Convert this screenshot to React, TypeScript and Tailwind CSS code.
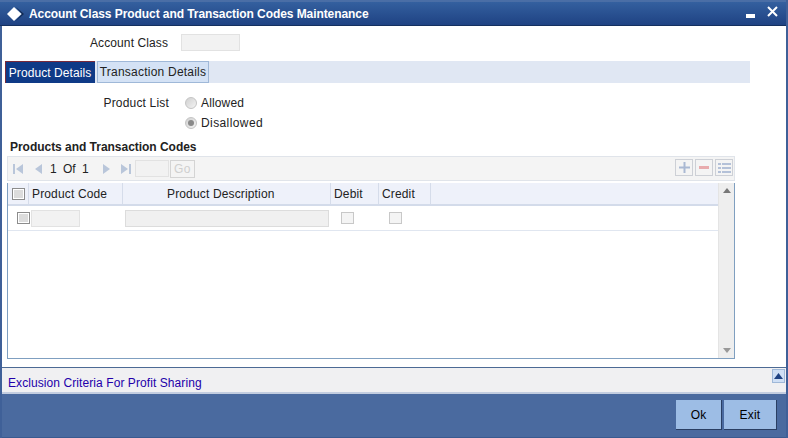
import React from 'react';

const Check: React.FC<{ dark?: boolean }> = ({ dark }) => (
  <span
    className={`block w-[13px] h-[12px] border ${
      dark ? 'border-[#8c8c8c] shadow-[inset_0_0_0_1px_#fff] bg-[#dcdcdc]' : 'border-[#c8c8c8] bg-[#f4f4f4]'
    }`}
  />
);

const Radio: React.FC<{ on?: boolean; label: string; track: string }> = ({ on, label, track }) => (
  <div className="flex items-center h-[20px]">
    <span className="w-[12px] h-[12px] rounded-full border border-[#c4c4c4] bg-gradient-to-br from-[#d0d0d0] to-[#f4f4f4] flex items-center justify-center">
      {on && <span className="w-[6px] h-[6px] rounded-full bg-[#8a8a8a]" />}
    </span>
    <span className={`ml-[4px] ${track}`}>{label}</span>
  </div>
);

const NavIcon: React.FC<{ dir: 'l' | 'r'; bar?: boolean }> = ({ dir, bar }) => {
  const w = bar ? 10 : 7;
  return (
    <svg width={w} height="10" viewBox={`0 0 ${w} 10`} className="shrink-0">
      {dir === 'l' ? (
        <>
          {bar && <rect x="0" y="0" width="2" height="10" fill="#b9c6da" />}
          <path d={bar ? 'M10 0V10L3 5Z' : 'M7 0V10L0 5Z'} fill="#b9c6da" />
        </>
      ) : (
        <>
          <path d="M0 0V10L7 5Z" fill="#b9c6da" />
          {bar && <rect x="8" y="0" width="2" height="10" fill="#b9c6da" />}
        </>
      )}
    </svg>
  );
};

const ToolBtn: React.FC<{ children: React.ReactNode }> = ({ children }) => (
  <span className="w-[18px] h-[17px] border border-[#cdd0d6] flex items-center justify-center">{children}</span>
);

export default function App() {
  return (
    <div
      className="w-[788px] h-[438px] flex flex-col bg-[#3f6098] px-[2px] text-[12px] text-[#222] overflow-hidden"
      style={{ fontFamily: '"Liberation Sans", Arial, sans-serif' }}
    >
      {/* title bar */}
      <div className="h-[26px] shrink-0 -ml-[2px] flex items-center bg-gradient-to-b from-[#34609f] to-[#1f4283] border-t-2 border-t-[#4a6ea6] border-b border-b-[#14305f] text-white">
        <svg width="18" height="14" viewBox="0 0 18 14" className="ml-[7px]">
          <path d="M9 0L17 7L9 14L15 7Z" fill="#12294f" />
          <path d="M7 0L14.5 7L7 14L0 7Z" fill="#fff" />
        </svg>
        <span className="ml-[4px] pt-[1px] font-bold tracking-[-0.07px]">Account Class Product and Transaction Codes Maintenance</span>
        <svg width="9" height="4" viewBox="0 0 9 4" className="ml-auto mt-[4px]">
          <rect width="9" height="4" fill="#fff" />
        </svg>
        <svg width="11" height="11" viewBox="0 0 11 11" className="ml-[12px] mr-[8px] -mt-[5px]">
          <path d="M1 1L10 10M10 1L1 10" stroke="#fff" strokeWidth="2" />
        </svg>
      </div>

      {/* form body */}
      <div className="h-[341px] shrink-0 bg-white flex flex-col">
        <div className="flex items-center mt-[8px] h-[17px]">
          <span className="w-[166px] text-right pt-[1px] tracking-[0.1px]">Account Class</span>
          <span className="ml-[13px] w-[59px] h-[17px] bg-[#f2f2f2] border border-[#e2e2e2]" />
        </div>

        <div className="mt-[10px] ml-[3px] w-[745px] h-[22px] bg-[#e0e7f3] flex">
          <div className="w-[90px] pr-[1px] bg-[#0f3a87] border-l border-t border-[#7a2a3a] text-white flex items-center justify-center tracking-[0.07px]">Product Details</div>
          <div className="ml-[2px] w-[112px] bg-[#d4e2f5] border border-[#9fb8d8] flex items-center justify-center tracking-[0.22px]">Transaction Details</div>
        </div>

        <div className="mt-[10px] flex">
          <span className="w-[167px] text-right h-[20px] leading-[20px] tracking-[0.18px]">Product List</span>
          <div className="ml-[16px]">
            <Radio label="Allowed" track="tracking-[0.15px]" />
            <Radio on label="Disallowed" track="tracking-[0.4px]" />
          </div>
        </div>

        <div className="mt-[7px] ml-[8px] font-bold h-[14px] leading-[14px] tracking-[-0.03px]">Products and Transaction Codes</div>

        {/* pager */}
        <div className="mt-[2px] ml-[5px] w-[728px] h-[25px] bg-[#f4f4f4] border border-[#e0e4ea] flex items-center pr-[1px]">
          <span className="ml-[5px]"><NavIcon dir="l" bar /></span>
          <span className="ml-[12px]"><NavIcon dir="l" /></span>
          <span className="ml-[8px] w-[38px] [word-spacing:3px] whitespace-nowrap">1 Of 1</span>
          <span className="ml-[15px]"><NavIcon dir="r" /></span>
          <span className="ml-[11px]"><NavIcon dir="r" bar /></span>
          <span className="ml-[4px] w-[34px] h-[17px] bg-[#f2f2f2] border border-[#e2e2e2]" />
          <span className="ml-[1px] w-[25px] h-[18px] border border-[#d4d4d4] text-[#cfcfcf] tracking-[0.4px] flex items-center justify-center">Go</span>
          <div className="ml-auto flex gap-[2px] -mt-[2px]">
            <ToolBtn>
              <svg width="11" height="11" viewBox="0 0 11 11"><path d="M0 4.5h11v2H0zM4.5 0h2v11h-2z" fill="#aab9d3" /></svg>
            </ToolBtn>
            <ToolBtn>
              <svg width="10" height="3" viewBox="0 0 10 3"><rect width="10" height="3" fill="#e8abad" /></svg>
            </ToolBtn>
            <ToolBtn>
              <svg width="13" height="10" viewBox="0 0 13 10">
                <path d="M0 0h3v2H0zM4 0h9v2H4zM0 4h3v2H0zM4 4h9v2H4zM0 8h3v2H0zM4 8h9v2H4z" fill="#b4c1d8" />
              </svg>
            </ToolBtn>
          </div>
        </div>

        {/* grid */}
        <div className="mt-[2px] ml-[5px] w-[728px] h-[176px] border-l border-r border-b border-[#7f9fc0] flex">
          <div className="flex-1 min-w-0 flex flex-col">
            <div className="h-[23px] bg-[#eef1fa] border-b-2 border-[#d3dbea] flex items-center">
              <div className="w-[21px] h-full flex items-center pl-[4px] border-r border-[#d5dcea]"><Check dark /></div>
              <div className="w-[94px] h-full flex items-center pl-[3px] pt-[1px] border-r border-[#d5dcea] tracking-[0.15px]">Product Code</div>
              <div className="w-[208px] h-full flex items-center pl-[44px] pt-[1px] border-r border-[#d5dcea] tracking-[0.15px]">Product Description</div>
              <div className="w-[48px] h-full flex items-center pl-[3px] pt-[1px] border-r border-[#d5dcea] tracking-[0.15px]">Debit</div>
              <div className="w-[52px] h-full flex items-center pl-[3px] pt-[1px] border-r border-[#d5dcea] tracking-[0.15px]">Credit</div>
            </div>
            <div className="h-[25px] border-b border-[#e0e6f0] flex items-center">
              <div className="w-[21px] pl-[9px] relative z-10"><Check dark /></div>
              <div className="w-[94px] pl-[2px]">
                <span className="block w-[49px] h-[17px] bg-[#f2f2f2] border border-[#e2e2e2]" />
              </div>
              <div className="w-[208px] pl-[2px]">
                <span className="block w-[204px] h-[17px] bg-[#f0f0f0] border border-[#dcdcdc]" />
              </div>
              <div className="w-[48px] pl-[10px]"><Check /></div>
              <div className="w-[52px] pl-[10px]"><Check /></div>
            </div>
          </div>
          <div className="w-[16px] bg-[#eeeeee] border-l border-[#e4e4e4] flex flex-col items-center justify-between py-[5px]">
            <svg width="8" height="5" viewBox="0 0 8 5"><path d="M4 0L8 5H0Z" fill="#777" /></svg>
            <svg width="8" height="5" viewBox="0 0 8 5"><path d="M0 0H8L4 5Z" fill="#999" /></svg>
          </div>
        </div>
      </div>

      {/* exclusion strip */}
      <div className="h-[27px] shrink-0 bg-[#f0f0f2] border-t border-[#4c6a94] border-b-2 border-b-[#c3cde0] flex items-start pl-[6px] pr-[1px]">
        <a className="text-[#2200aa] mt-[6px] tracking-[0.08px]">Exclusion Criteria For Profit Sharing</a>
        <span className="ml-auto mt-[1px] w-[13px] h-[14px] bg-[#cfdff5] border border-[#9fb8d8] flex items-center justify-center">
          <svg width="9" height="6" viewBox="0 0 9 6"><path d="M4.5 0L9 6H0Z" fill="#1f4283" /></svg>
        </span>
      </div>

      {/* footer */}
      <div className="flex-1 bg-[#4a6a9f] border-b border-[#3a5a8f] flex items-start justify-end pt-[6px] pr-[9px] gap-[2px] text-black">
        <button className="w-[46px] h-[30px] bg-[#9dbde5] border-r border-b border-[#2a3f63] tracking-[0.2px]">Ok</button>
        <button className="w-[53px] h-[30px] bg-[#9dbde5] border-r border-b border-[#2a3f63] tracking-[0.2px]">Exit</button>
      </div>
    </div>
  );
}
